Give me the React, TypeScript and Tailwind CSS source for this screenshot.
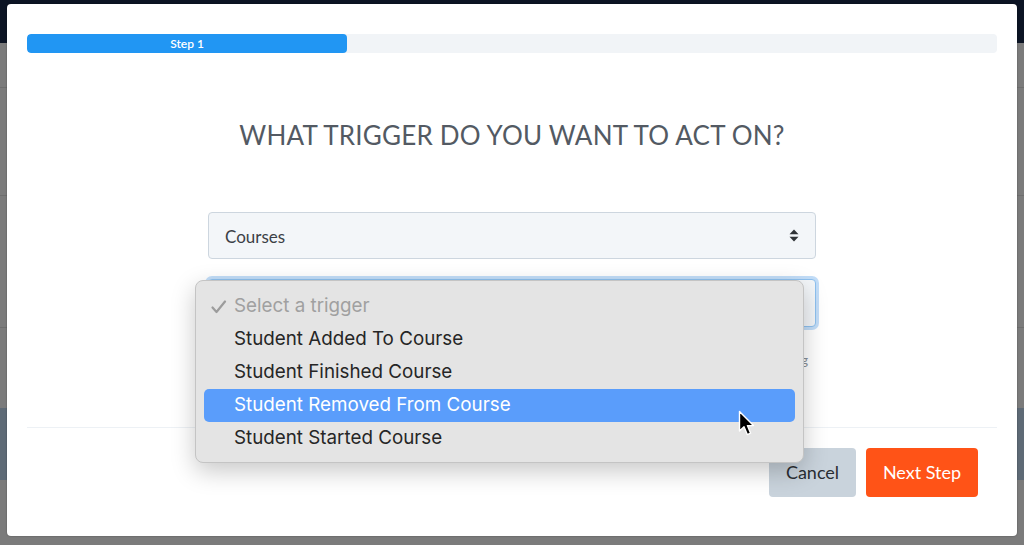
import React from "react";

function UpDown() {
  return (
    <svg width="10" height="13" viewBox="0 0 10 13" className="shrink-0">
      <path d="M5 0.5 L9.5 5.2 L0.5 5.2 Z" fill="#2f3337" />
      <path d="M5 12.5 L9.5 7.8 L0.5 7.8 Z" fill="#2f3337" />
    </svg>
  );
}

function Cursor() {
  return (
    <svg width="18" height="28" viewBox="0 0 18 28">
      <path
        d="M1.5 1.5 L1.5 21 L6 16.8 L9.3 24.6 L12.6 23.2 L9.4 15.6 L15.5 15.6 Z"
        fill="#000"
        stroke="#fff"
        strokeWidth="1.4"
        strokeLinejoin="round"
      />
    </svg>
  );
}

function Check() {
  return (
    <svg width="16" height="14" viewBox="0 0 16 14" className="absolute left-[7px] top-[10px]">
      <path d="M1.5 7.5 L5.5 12 L14 1.5" fill="none" stroke="#9c9c9c" strokeWidth="2.2" strokeLinecap="round" strokeLinejoin="round" />
    </svg>
  );
}

export default function App() {
  const items = [
    "Student Added To Course",
    "Student Finished Course",
    "Student Removed From Course",
    "Student Started Course",
  ];
  return (
    <div className="relative w-[1024px] h-[545px] overflow-hidden bg-[#7b7b7b] [font-family:Lato,'Open_Sans',sans-serif]">
      {/* dimmed app behind */}
      <div className="flex flex-col h-full">
        <div className="h-[43px] bg-[#0c1424] shrink-0" />
        <div className="h-[45px] border-b border-[#6e6e6e]" />
        <div className="h-[108px] border-b border-[#6e6e6e]" />
        <div className="h-[132px] border-b border-[#6e6e6e]" />
        <div className="h-[80px]" />
        <div className="h-[72px] bg-[#5e6a76]" />
      </div>

      {/* modal */}
      <div className="absolute left-[7px] top-[4px] w-[1010px] h-[532px] bg-white rounded-[4px] shadow-[0_0_2px_rgba(0,0,0,0.35)] flex flex-col px-[20px]">
        <div className="mt-[30px] h-[19px] rounded-[4px] bg-[#f1f4f7] flex overflow-hidden">
          <div className="w-[320px] bg-[#2196f3] rounded-[4px] flex items-center justify-center text-white text-[12px] font-semibold">
            Step 1
          </div>
        </div>

        <h1 className="mt-[66px] text-center text-[26px] leading-[32px] text-[#535a63] font-normal tracking-[0.2px]">
          WHAT TRIGGER DO YOU WANT TO ACT ON?
        </h1>

        <div className="mx-auto w-[608px] mt-[61px] flex flex-col">
          <div className="h-[47px] rounded-[4px] border border-[#cdd6df] bg-[#f3f6f9] flex items-center justify-between pl-[16px] pr-[16px] text-[17px] text-[#3b4046]">
            <span className="pt-[2px]">Courses</span>
            <UpDown />
          </div>
          <div className="mt-[20px] h-[48px] rounded-[4px] border border-[#8ec1ef] bg-[#f3f6f9] shadow-[0_0_0_3px_rgba(120,180,240,0.45)]" />
          <div className="mt-[24px] text-right pr-[8px] text-[13px] text-[#8a9096]">
            Choose what starts this automation when something is happening
          </div>
        </div>

        <div className="mt-[56px] h-px bg-[#edf1f5]" />

        <div className="mt-[20px] flex justify-end gap-[10px] pr-[19px]">
          <button className="w-[87px] h-[49px] rounded-[4px] bg-[#c9d3dc] text-[#2a2e33] text-[18px]">
            Cancel
          </button>
          <button className="w-[112px] h-[49px] rounded-[4px] bg-[#ff5317] text-white text-[18px]">
            Next Step
          </button>
        </div>
      </div>

      {/* native dropdown menu */}
      <div className="absolute left-[195px] top-[280px] w-[609px] h-[183px] rounded-[8px] bg-[#e4e4e4] border border-[#c4c4c4] shadow-[0_8px_24px_rgba(0,0,0,0.22)] flex flex-col px-[8px] pt-[9px] [font-family:Inter,Roboto,sans-serif] text-[18.8px]">
        <div className="h-[33px] flex items-center text-[#a0a0a0] relative pl-[30px]">
          <Check />
          Select a trigger
        </div>
        {items.map((t, i) => (
          <div
            key={t}
            className={
              i === 2
                ? "h-[33px] flex items-center pl-[30px] rounded-[5px] bg-[#5a9dfb] text-white"
                : "h-[33px] flex items-center pl-[30px] text-[#262626]"
            }
          >
            {t}
          </div>
        ))}
      </div>

      <div className="absolute left-[738px] top-[410px]">
        <Cursor />
      </div>
    </div>
  );
}
